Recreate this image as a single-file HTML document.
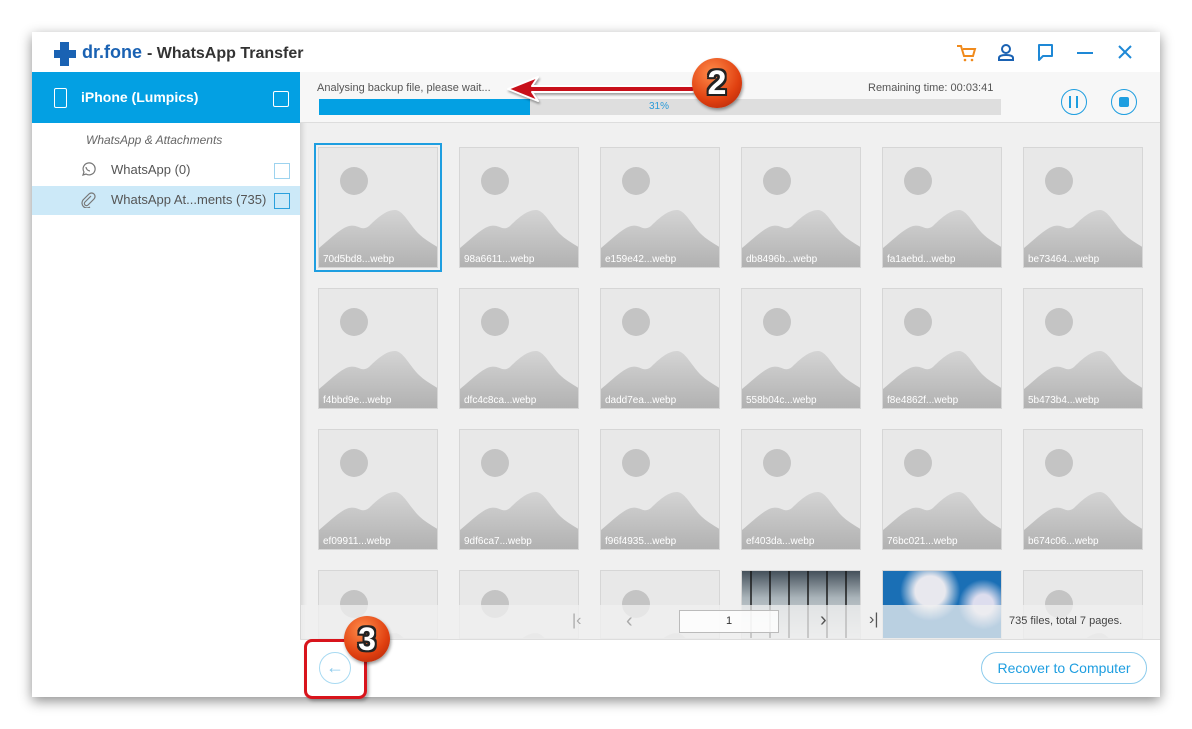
<!DOCTYPE html>
<html><head><meta charset="utf-8"><style>
*{box-sizing:border-box;margin:0;padding:0}
body{width:1192px;height:729px;background:#fff;position:relative;overflow:hidden;font-family:"Liberation Sans","DejaVu Sans",sans-serif}
.a{position:absolute}
.win{left:32px;top:32px;width:1128px;height:665px;background:#fff;box-shadow:0 4px 12px rgba(0,0,0,.45)}
.tile{position:absolute;width:120px;height:121px;background:#e8e8e8;border:1px solid #d6d6d6;overflow:hidden}
.tile span{position:absolute;left:4px;bottom:2px;font-size:10px;color:#fff}
.sel{outline:2px solid #1e9ee0;outline-offset:2px}
.badge{border-radius:50%;background:radial-gradient(circle at 40% 30%,#ff8c4a,#e04010 60%,#a82008);box-shadow:1px 2px 3px rgba(0,0,0,.4);color:#fff;font-weight:bold;text-align:center;text-shadow:-2px -2px 0 #222,2px -2px 0 #222,-2px 2px 0 #222,2px 2px 0 #222,0 2px 0 #222,0 -2px 0 #222,2px 0 0 #222,-2px 0 0 #222}
</style></head><body>
<div class="a win"></div>
<div class="a" style="left:52px;top:42px;width:24px;height:24px">
<div class="a" style="left:8px;top:0;width:9px;height:24px;background:#1a62b3"></div>
<div class="a" style="left:0;top:8px;width:24px;height:8px;background:#1a62b3"></div>
<div class="a" style="left:0;top:8px;width:5px;height:8px;background:#fff"></div>
<div class="a" style="left:2px;top:8px;width:3px;height:8px;background:#1a62b3"></div>
</div>
<div class="a" style="left:82px;top:42px;font-size:18px;font-weight:bold;color:#1a62b3">dr.fone <span style="color:#333;font-size:16px">- WhatsApp Transfer</span></div>
<svg class="a" style="left:955px;top:42px" width="200" height="22" fill="none" stroke-width="2">
<path d="M2 4h4l3 10h9l2-7H8" stroke="#f08a1c"/><circle cx="10" cy="18" r="1.3" fill="#f08a1c" stroke="none"/><circle cx="17" cy="18" r="1.3" fill="#f08a1c" stroke="none"/>
<circle cx="51" cy="7" r="4" stroke="#1a62b3"/><path d="M44 18v-2c0-2 3-3 7-3s7 1 7 3v2z" stroke="#1a62b3"/>
<path d="M84 3h13v11h-9l-4 4z" stroke="#1e88d6" stroke-linejoin="round"/>
<path d="M122 11h16" stroke="#1e88d6"/>
<path d="M164 4l12 12M176 4l-12 12" stroke="#1e88d6"/>
</svg>
<div class="a" style="left:32px;top:72px;width:268px;height:51px;background:#03a0e3"></div>
<div class="a" style="left:54px;top:88px;width:13px;height:20px;border:1.5px solid #fff;border-radius:2px"></div>
<div class="a" style="left:81px;top:89px;font-size:14px;font-weight:bold;color:#fff">iPhone (Lumpics)</div>
<div class="a" style="left:273px;top:91px;width:16px;height:16px;border:1.5px solid #fff;border-radius:2px"></div>
<div class="a" style="left:86px;top:133px;font-size:12px;font-style:italic;color:#666">WhatsApp &amp; Attachments</div>
<svg class="a" style="left:80px;top:161px" width="16" height="16" fill="none" stroke="#777" stroke-width="1.2"><path d="M3 14l1-3a6 6 0 1 1 2 2z"/><path d="M6 6c0 2 2 4 4 4"/></svg>
<div class="a" style="left:111px;top:162px;font-size:13px;color:#555">WhatsApp (0)</div>
<div class="a" style="left:274px;top:163px;width:16px;height:16px;border:1px solid #9dd3ef"></div>
<div class="a" style="left:32px;top:186px;width:268px;height:29px;background:#cce9f8"></div>
<svg class="a" style="left:80px;top:192px" width="16" height="16" fill="none" stroke="#777" stroke-width="1.2"><path d="M11 4L5 10a2 2 0 0 0 3 3l6-6a3.5 3.5 0 0 0-5-5L3 8a5 5 0 0 0 7 7"/></svg>
<div class="a" style="left:111px;top:192px;font-size:13px;color:#555">WhatsApp At...ments (735)</div>
<div class="a" style="left:274px;top:193px;width:16px;height:16px;border:1.5px solid #2aa0dd"></div>
<div class="a" style="left:300px;top:72px;width:860px;height:567px;background:#f0f0f0;box-shadow:inset 6px 0 6px -4px rgba(0,0,0,.15)"></div>
<div class="a" style="left:300px;top:72px;width:860px;height:51px;background:#f7f7f7;border-bottom:1px solid #ddd"></div>
<div class="a" style="left:317px;top:82px;font-size:11px;color:#555">Analysing backup file, please wait...</div>
<div class="a" style="left:868px;top:82px;font-size:11px;color:#555">Remaining time: 00:03:41</div>
<div class="a" style="left:319px;top:99px;width:682px;height:16px;background:#dedede"></div>
<div class="a" style="left:319px;top:99px;width:211px;height:16px;background:#03a0e3"></div>
<div class="a" style="left:649px;top:101px;font-size:10px;color:#2a9ad8">31%</div>
<div class="a" style="left:1061px;top:89px;width:26px;height:26px;border:1.5px solid #1e9ee0;border-radius:50%"></div>
<div class="a" style="left:1069px;top:96px;width:2px;height:12px;background:#1e9ee0"></div>
<div class="a" style="left:1076px;top:96px;width:2px;height:12px;background:#1e9ee0"></div>
<div class="a" style="left:1111px;top:89px;width:26px;height:26px;border:1.5px solid #1e9ee0;border-radius:50%"></div>
<div class="a" style="left:1119px;top:97px;width:10px;height:10px;background:#1e9ee0;border-radius:2px"></div>
<svg width="0" height="0" style="position:absolute"><defs>
<linearGradient id="g" x1="0" y1="0" x2="0" y2="1"><stop offset="0" stop-color="#d4d4d4"/><stop offset="1" stop-color="#b0b0b0"/></linearGradient>
<symbol id="ph" viewBox="0 0 120 121"><circle cx="35" cy="33" r="14" fill="#c4c4c4"/><path d="M0 121V100c12-10 22-20 30-22 10-2 12 6 20 0 10-10 18-16 26-16 8 0 14 14 24 24 6 6 14 10 20 14v21z" fill="url(#g)"/></symbol></defs></svg>
<div id="grid"></div>
<script>
var names=[["70d5bd8","98a6611","e159e42","db8496b","fa1aebd","be73464"],["f4bbd9e","dfc4c8ca","dadd7ea","558b04c","f8e4862f","5b473b4"],["ef09911","9df6ca7","f96f4935","ef403da","76bc021","b674c06"],["","","","","",""]];
var xs=[318,459,600,741,882,1023],ys=[147,288,429,570],h="";
for(var r=0;r<4;r++)for(var c=0;c<6;c++){
 var st="left:"+xs[c]+"px;top:"+ys[r]+"px;"+(r==3?"height:69px;":"");
 var inner;
 if(r==3&&c==3)inner='<div style="position:absolute;inset:0;background:linear-gradient(#44505a,#aab4ba 40%,#e4e6e6)"></div><div style="position:absolute;inset:0;background:repeating-linear-gradient(90deg,transparent 0 8px,rgba(20,20,20,.7) 8px 10px,transparent 10px 19px)"></div>';
 else if(r==3&&c==4)inner='<div style="position:absolute;inset:0;background:radial-gradient(circle at 40% 30%,#e8e8ee 0 15px,transparent 30px),radial-gradient(circle at 85% 50%,#dde 0 10px,transparent 25px),#1a6fb5"></div>';
 else inner='<svg width="120" height="121"><use href="#ph"/></svg>'+(r<3?'<span>'+names[r][c]+'...webp</span>':'');
 h+='<div class="tile'+(r==0&&c==0?' sel':'')+'" style="'+st+'">'+inner+'</div>';
}
document.getElementById("grid").innerHTML=h;
</script>
<div class="a" style="left:301px;top:605px;width:859px;height:34px;background:rgba(240,240,240,.75)"></div>
<div class="a" style="left:572px;top:612px;font-size:16px;color:#aaa">|&lsaquo;</div>
<div class="a" style="left:626px;top:610px;font-size:20px;color:#aaa">&lsaquo;</div>
<div class="a" style="left:679px;top:610px;width:100px;height:23px;background:rgba(255,255,255,.8);border:1px solid #bbb;font-size:11px;color:#333;text-align:center;line-height:21px">1</div>
<div class="a" style="left:820px;top:609px;font-size:20px;color:#555">&rsaquo;</div>
<div class="a" style="left:869px;top:611px;font-size:16px;color:#555">&rsaquo;|</div>
<div class="a" style="left:1009px;top:615px;font-size:11px;color:#444">735 files, total 7 pages.</div>
<div class="a" style="left:300px;top:639px;width:860px;height:58px;background:#fff;border-top:1px solid #ddd"></div>
<div class="a" style="left:981px;top:652px;width:166px;height:32px;border:1px solid #8ccbec;border-radius:16px;color:#1e9ee0;font-size:14px;text-align:center;line-height:30px">Recover to Computer</div>
<div class="a" style="left:319px;top:652px;width:32px;height:32px;border:1px solid #a8daf2;border-radius:50%;color:#8ccbec;font-size:18px;text-align:center;line-height:29px">&larr;</div>
<div class="a" style="left:304px;top:639px;width:63px;height:60px;border:3px solid #d8141c;border-radius:8px;box-shadow:2px 2px 3px rgba(0,0,0,.3)"></div>
<svg class="a" style="left:500px;top:72px" width="200" height="34"><g filter="drop-shadow(1px 2px 1px rgba(0,0,0,.35))"><path d="M8 17l30-12-6 9h160a3 3 0 0 1 0 6H32l6 9z" fill="#c8101a" stroke="#fff" stroke-width="2" stroke-linejoin="round"/></g></svg>
<div class="a badge" style="left:692px;top:58px;width:50px;height:50px;font-size:34px;line-height:50px">2</div>
<div class="a badge" style="left:344px;top:616px;width:46px;height:46px;font-size:32px;line-height:46px">3</div>
</body></html>
